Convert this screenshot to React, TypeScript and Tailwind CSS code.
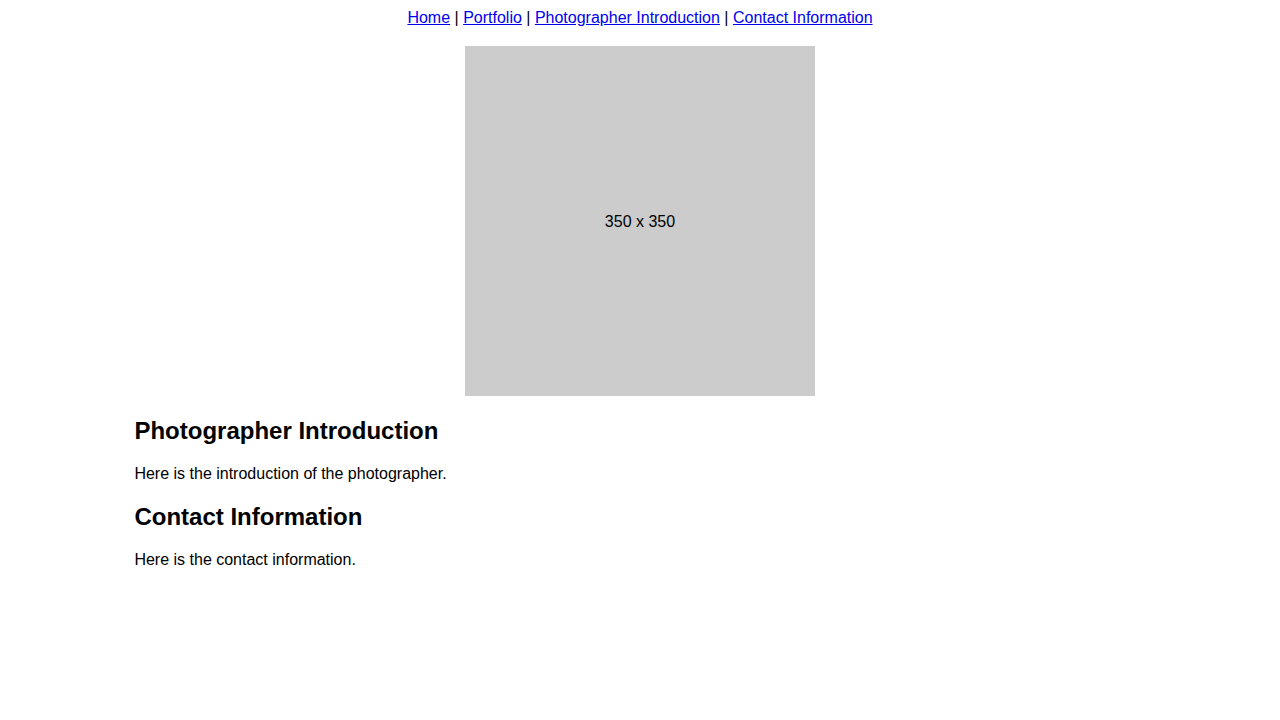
import React from 'react';

const links = ['Home', 'Portfolio', 'Photographer Introduction', 'Contact Information'];

const App: React.FC = () => {
  return (
    <div className="m-2 bg-white text-black font-['Liberation_Sans',Arial,sans-serif] text-base/[normal]">
      {/* Top nav */}
      <nav className="text-center pt-px">
        {links.map((label, i) => (
          <React.Fragment key={label}>
            {i > 0 && ' | '}
            <a href="#" className="text-[#0000ee] underline">
              {label}
            </a>
          </React.Fragment>
        ))}
      </nav>

      {/* Placeholder photo */}
      <div className="mt-[19px] flex justify-center">
        <div className="w-[350px] h-[350px] bg-[#cccccc] flex items-center justify-center pt-0.5">
          350 x 350
        </div>
      </div>

      {/* Sections */}
      <main className="w-4/5 mx-auto pt-px">
        <h2 className="my-[0.83em] text-2xl/[normal] font-bold">Photographer Introduction</h2>
        <p className="my-4">Here is the introduction of the photographer.</p>
        <h2 className="my-[0.83em] text-2xl/[normal] font-bold">Contact Information</h2>
        <p className="my-4">Here is the contact information.</p>
      </main>
    </div>
  );
};

export default App;
